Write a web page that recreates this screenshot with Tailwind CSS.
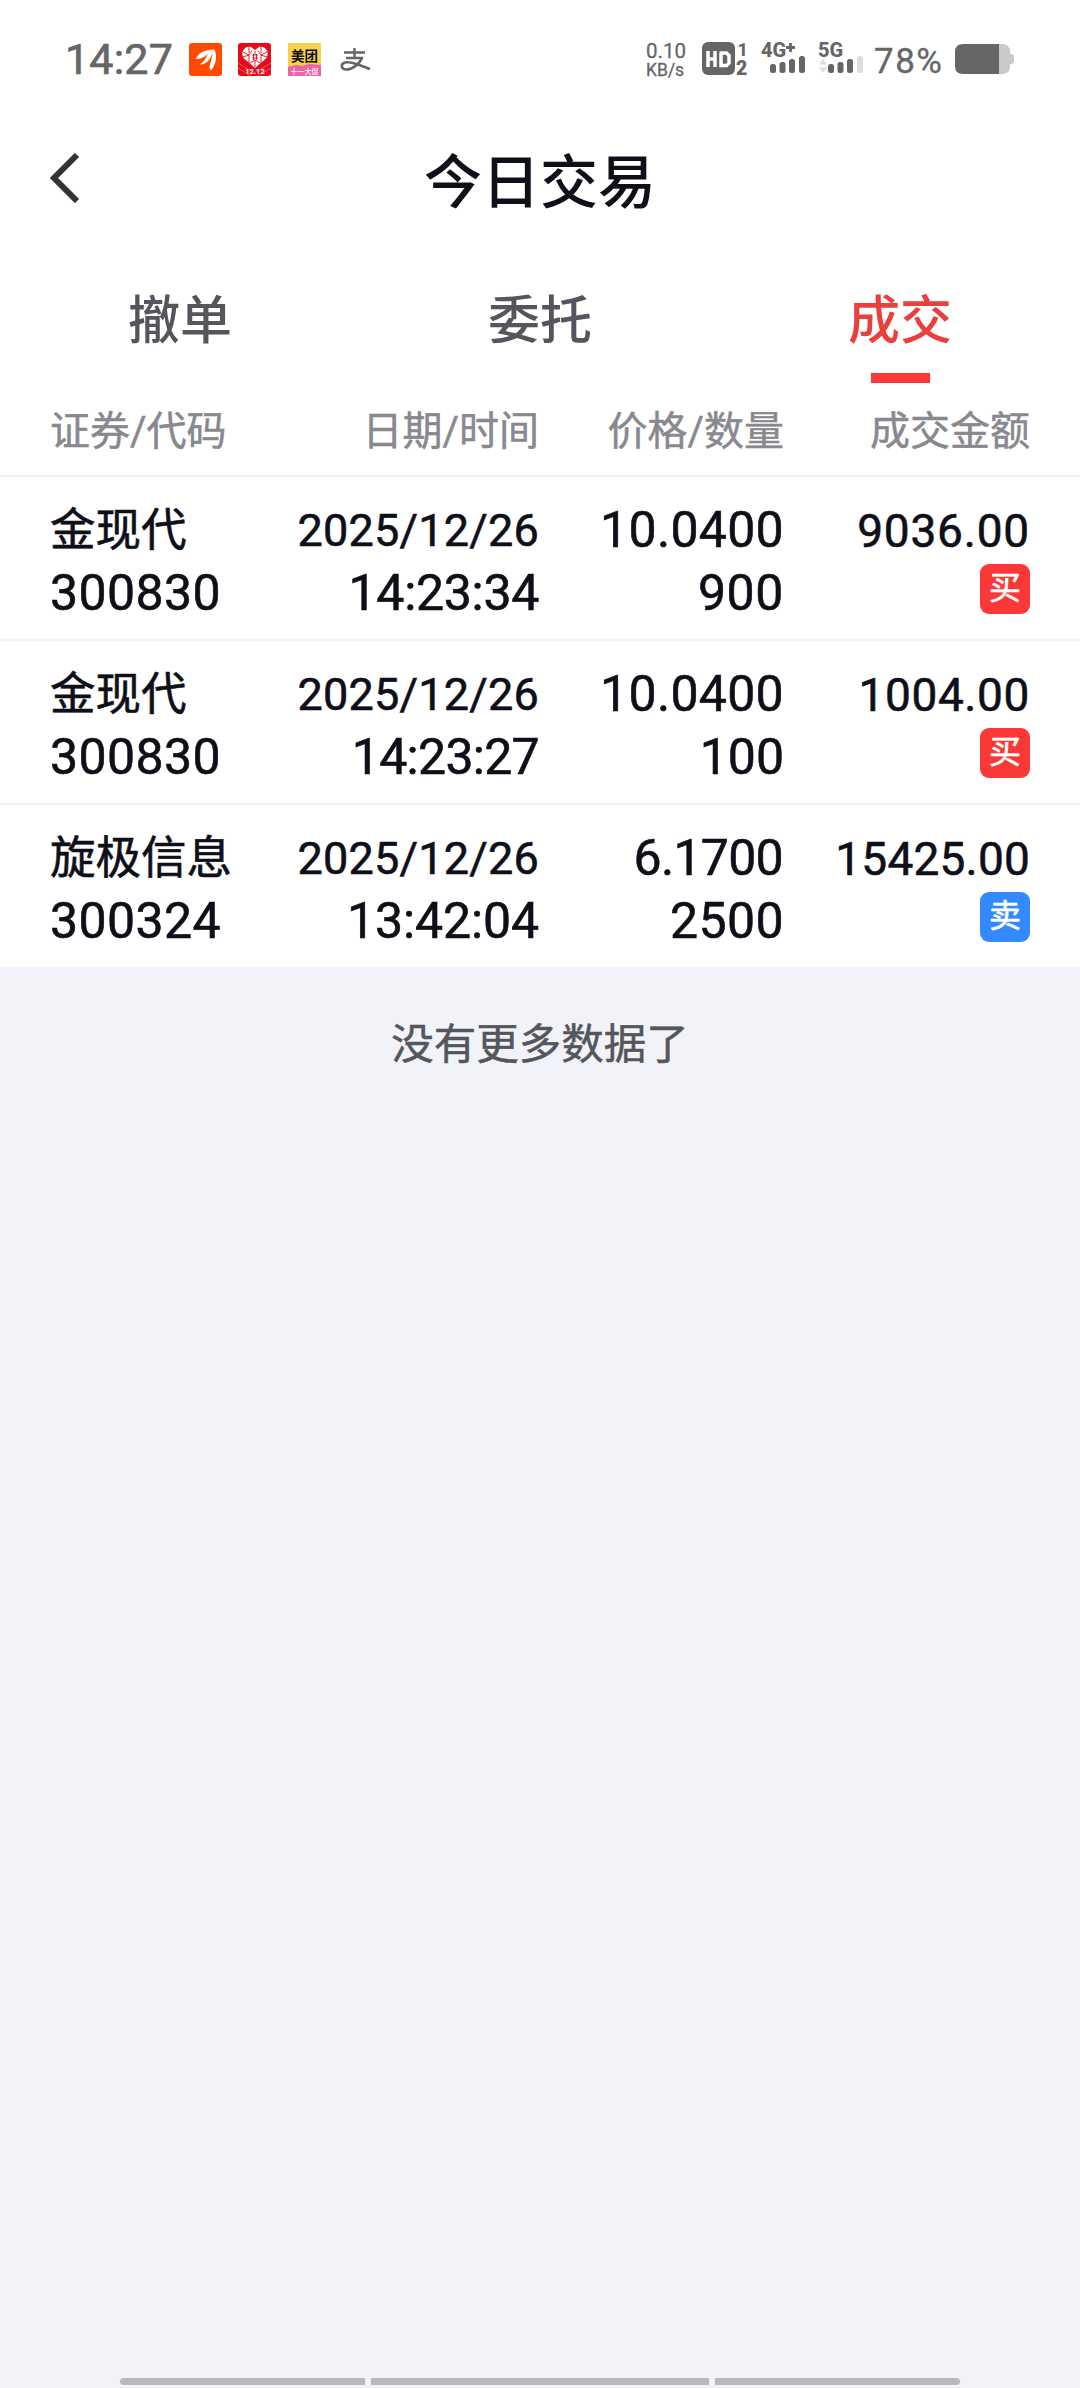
<!DOCTYPE html>
<html lang="zh-CN">
<head>
    <meta charset="UTF-8">
    <meta name="viewport" content="width=device-width, initial-scale=1.0">
    <title>今日交易</title>
    <script src="https://cdn.jsdelivr.net/npm/@tailwindcss/browser@4"></script>
</head>
<body class="bg-[#f2f3f8] text-[#0f0f19] font-[Roboto,'Noto_Sans_CJK_SC',sans-serif]">
    <div class="h-[2388px] flex flex-col overflow-hidden">

        <!-- 状态栏 -->
        <div class="h-[118px] shrink-0 bg-white flex items-center pl-[65px] pr-[66px] text-[#666]">
            <span class="w-[124px] text-[43px] leading-none tracking-[0.2px] [-webkit-text-stroke:0.7px]">14:27</span>
            <div class="flex items-center gap-4">
                <svg class="w-[33px] h-[33px]" viewBox="0 0 33 33">
                    <rect width="33" height="33" rx="3" fill="#ff4a00"/>
                    <path d="M7 16C9 10 16 6.500 25 6.500C21 8 20 10 17 12.500C14 15 10 16.500 7 16Z M10.500 21.500C15 19 17 15 18.500 11.500C21 8 23 7 25.500 6.500C24 9 23 12 21 15.500C18 20 14 22 10.500 21.500Z M22 27.500C19.500 25 21 21 22 18C23 14 23.500 10 25.500 6.500C28 12 28 20 22 27.500Z" fill="#fff"/>
                </svg>
                <svg class="w-[33px] h-[33px]" viewBox="0 0 33 33">
                    <rect width="33" height="33" rx="3" fill="#e50b18"/>
                    <path d="M0 20L16 30L33 20M0 25L13 33M33 25L20 33" stroke="#f6505a" stroke-width="1" fill="none"/>
                    <path d="M17 25L5.500 15C2 9 7 2 13 4L17 7L21 4C27 2 32 9 28.500 15Z" fill="#fff"/>
                    <path d="M17 8V12M17 17V24M11 4V10M23 4V10M5 9L11 12L14 8M29 9L23 12L20 8M5 14L11 12V20M29 14L23 12V20M14 12H20M14 15H20M15.500 11V17M18.500 11V17M12 20L17 17L22 20" stroke="#e50b18" stroke-width="0.900" fill="none"/>
                    <text x="17" y="30.500" text-anchor="middle" font-size="7.500" font-weight="700" fill="#fff">12.12</text>
                </svg>
                <svg class="w-[33px] h-[33px] ml-px" viewBox="0 0 33 33">
                    <rect width="33" height="33" fill="#f7d04e"/>
                    <path d="M0 24L8 22L14 23L21 21L33 22V33H0Z" fill="#ee62a8"/>
                    <text x="16.500" y="17.500" text-anchor="middle" font-size="13.500" font-weight="700" fill="#111">美团</text>
                    <text x="16.500" y="31" text-anchor="middle" font-size="7" font-weight="500" fill="#fff">十一大促</text>
                </svg>
                <svg class="w-[31px] h-[33px] ml-[3px]" viewBox="0 0 31 33" fill="none" stroke="#666">
                    <path d="M4 9.500H25M14.500 5V15M6 15H23" stroke-width="2.400"/>
                    <path d="M22 15C20 20 13 26.500 6.500 26.500C1 26.500 0 21 5 19.500C11 18 22 23 30 26" stroke-width="2.600"/>
                </svg>
            </div>

            <div class="ml-auto flex items-center">
                <div class="w-[56px] flex flex-col [-webkit-text-stroke:0.3px]">
                    <span class="text-[20.500px] leading-[20px] pt-0.5">0.10</span>
                    <span class="text-[17.500px] leading-[19px]">KB/s</span>
                </div>
                <svg class="w-[59px] h-[36px] overflow-visible" viewBox="0 0 59 36" fill="#666">
                    <rect y="1" width="33" height="33" rx="6"/>
                    <path d="M6 10V26M13 10V26M6 18H13M19 12V24.500H24.500L27 22V14.500L24.500 12H17.500" stroke="#fff" stroke-width="3.500" fill="none"/>
                    <text x="35.500" y="14.500" font-size="18" font-weight="800">1</text>
                    <text x="34" y="33.500" font-size="19.500" font-weight="900">2</text>
                </svg>
                <svg class="w-[58px] h-[36px] overflow-visible" viewBox="0 0 58 36" fill="#666">
                    <text x="0" y="16" font-size="20" font-weight="800">4G</text>
                    <path d="M25 6.500H34M29.500 2V11" stroke="#666" stroke-width="2.800"/>
                    <rect x="9" y="23" width="6" height="9" rx="2.500"/>
                    <rect x="18.500" y="21" width="6" height="11" rx="2.500"/>
                    <rect x="28" y="18" width="6" height="14" rx="2.500"/>
                    <rect x="38" y="15" width="6" height="17" rx="2.500"/>
                </svg>
                <svg class="w-[55px] h-[36px] overflow-visible" viewBox="0 0 55 36" fill="#666">
                    <text x="-1" y="16" font-size="20" font-weight="800">5G</text>
                    <path d="M0 23.500L4 18L8 23.500ZM0 26.500L4 32L8 26.500Z" fill="#ddd"/>
                    <rect x="9" y="23" width="6" height="9" rx="2.500"/>
                    <rect x="18.500" y="21" width="6" height="11" rx="2.500"/>
                    <rect x="28" y="18" width="6" height="14" rx="2.500"/>
                    <rect x="38" y="15" width="6" height="17" rx="2.500" fill="#ddd"/>
                </svg>
                <span class="w-[81px] pt-1 text-[35px] leading-none tracking-[1.500px] [-webkit-text-stroke:0.3px]">78%</span>
                <svg class="w-[59px] h-[30px]" viewBox="0 0 59 30">
                    <path d="M43 0H47Q55 0 55 8V10H56Q59 10 59 13V17Q59 20 56 20H55V22Q55 30 47 30H43Z" fill="#c9c9c9"/>
                    <path d="M8 0H44V30H8Q0 30 0 22V8Q0 0 8 0Z" fill="#666"/>
                </svg>
            </div>
        </div>

        <!-- 标题栏 -->
        <header class="h-[124px] shrink-0 bg-white grid grid-cols-[1fr_auto_1fr] items-center px-[50px]">
            <svg class="w-[30px] h-[50px] -mt-1" viewBox="0 0 30 50" fill="none" stroke="#333" stroke-width="6">
                <path d="M27 2L4 25L27 48"/>
            </svg>
            <h1 class="pt-1.5 text-[58px] leading-none font-medium">今日交易</h1>
        </header>

        <!-- 标签页 -->
        <nav class="h-[141px] shrink-0 bg-white grid grid-cols-3 text-center text-[52px] leading-[70px] font-medium text-[#55555e]">
            <div class="pt-[45px]">撤单</div>
            <div class="pt-[45px]">委托</div>
            <div class="pt-[45px] flex flex-col items-center text-[#e93f3d]">
                成交
                <div class="w-[59px] h-[10px] mt-4 bg-[#fa3837]"></div>
            </div>
        </nav>

        <!-- 表头 -->
        <div class="h-[94px] shrink-0 bg-white border-b-2 border-[#ededef] grid grid-cols-[190px_299px_245px_246px] items-center pt-1.5 px-[50px] text-right text-[40px] leading-none text-[#88888e] [-webkit-text-stroke:0.5px]">
            <div class="text-left">证券/代码</div>
            <div>日期/时间</div>
            <div>价格/数量</div>
            <div>成交金额</div>
        </div>

        <!-- 成交记录 -->
        <main class="[-webkit-text-stroke:0.6px]">
            <div class="h-[164px] bg-white border-b-2 border-[#f0f0f2] pt-[21px] px-[50px] grid grid-cols-[190px_299px_245px_246px] grid-rows-[63px_63px] items-center text-right text-[50px] leading-none">
                <div class="text-left pt-[3px] text-[45.500px]">金现代</div>
                <div class="pt-0.5 text-[45px] tracking-[0.2px]">2025/12/26</div>
                <div class="tracking-[0.3px]">10.0400</div>
                <div class="pt-0.5 text-[46px] tracking-[0.8px]">9036.00</div>
                <div class="text-left tracking-[0.4px]">300830</div>
                <div class="tracking-[-0.3px]">14:23:34</div>
                <div class="tracking-[0.6px]">900</div>
                <div class="justify-self-end w-[50px] h-[50px] -mt-2 rounded-[9px] bg-[#fa3837] text-white text-[32px] leading-[48px] text-center">买</div>
            </div>
            <div class="h-[164px] bg-white border-b-2 border-[#f0f0f2] pt-[21px] px-[50px] grid grid-cols-[190px_299px_245px_246px] grid-rows-[63px_63px] items-center text-right text-[50px] leading-none">
                <div class="text-left pt-[3px] text-[45.500px]">金现代</div>
                <div class="pt-0.5 text-[45px] tracking-[0.2px]">2025/12/26</div>
                <div class="tracking-[0.3px]">10.0400</div>
                <div class="pt-0.5 text-[46px] tracking-[0.6px]">1004.00</div>
                <div class="text-left tracking-[0.4px]">300830</div>
                <div class="tracking-[-0.7px]">14:23:27</div>
                <div>100</div>
                <div class="justify-self-end w-[50px] h-[50px] -mt-2 rounded-[9px] bg-[#fa3837] text-white text-[32px] leading-[48px] text-center">买</div>
            </div>
            <div class="h-[162px] bg-white pt-[21px] px-[50px] grid grid-cols-[190px_299px_245px_246px] grid-rows-[63px_63px] items-center text-right text-[50px] leading-none">
                <div class="text-left pt-[3px] text-[45.500px]">旋极信息</div>
                <div class="pt-0.5 text-[45px] tracking-[0.2px]">2025/12/26</div>
                <div class="pr-px tracking-[-0.7px]">6.1700</div>
                <div class="pt-0.5 text-[46px] tracking-[0.2px]">15425.00</div>
                <div class="text-left tracking-[0.4px]">300324</div>
                <div class="tracking-[-0.1px]">13:42:04</div>
                <div class="tracking-[0.4px]">2500</div>
                <div class="justify-self-end w-[50px] h-[50px] -mt-2 rounded-[9px] bg-[#338aff] text-white text-[32px] leading-[48px] text-center">卖</div>
            </div>
        </main>

        <p class="mt-[51px] text-center text-[42.500px] leading-[54px] text-[#55555c] [-webkit-text-stroke:0.5px]">没有更多数据了</p>

        <!-- 底部导航条 -->
        <div class="mt-auto mb-[3px] mx-[120px] h-[7px] shrink-0 flex gap-1.5">
            <div class="w-[245px] rounded-l-full bg-[#b8babd]"></div>
            <div class="flex-1 bg-[#b8babd]"></div>
            <div class="w-[245px] rounded-r-full bg-[#b8babd]"></div>
        </div>
    </div>
</body>
</html>
